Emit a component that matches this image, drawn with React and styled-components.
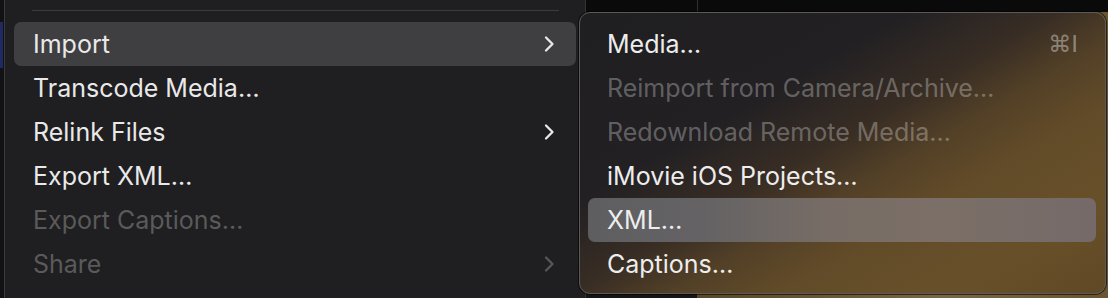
import React from "react";
import styled, { createGlobalStyle } from "styled-components";

const GlobalStyle = createGlobalStyle`
  html, body {
    margin: 0;
    padding: 0;
    background: #0b0b0b;
    overflow: hidden;
  }
  body {
    font-family: Inter, "Open Sans", "Liberation Sans", sans-serif;
    -webkit-font-smoothing: antialiased;
  }
`;

const mainItems = [
    { label: "Import", sub: true, active: true },
    { label: "Transcode Media…" },
    { label: "Relink Files", sub: true },
    { label: "Export XML…" },
    { label: "Export Captions…", disabled: true },
    { label: "Share", sub: true, disabled: true },
];

const subItems = [
    { label: "Media…", shortcut: "⌘I" },
    { label: "Reimport from Camera/Archive…", disabled: true },
    { label: "Redownload Remote Media…", disabled: true },
    { label: "iMovie iOS Projects…" },
    { label: "XML…", active: true },
    { label: "Captions…" },
];

const Chevron = ({ dim }) => (
    <svg width="12" height="18" viewBox="0 0 12 18" fill="none">
        <path
            d="M3 2.5 L9.5 9 L3 15.5"
            stroke={dim ? "#575757" : "#e8e8e8"}
            strokeWidth="2.3"
            strokeLinecap="round"
            strokeLinejoin="round"
        />
    </svg>
);

const App = () => {
    return (
        <Page>
            <GlobalStyle />
            <Edge>
                <BlueTab />
            </Edge>
            <MainMenu>
                <Separator />
                {mainItems.map((item) => (
                    <Row key={item.label} $active={item.active}>
                        <Label $disabled={item.disabled}>{item.label}</Label>
                        {item.sub && <Chevron dim={item.disabled} />}
                    </Row>
                ))}
            </MainMenu>
            <Backdrop>
                <TopBar>
                    <TopCell />
                    <TopCell $line />
                </TopBar>
                <Lower>
                    <DarkCell />
                    <VideoCell />
                </Lower>
            </Backdrop>
            <SubMenu>
                {subItems.map((item) => (
                    <SubRow key={item.label} $active={item.active}>
                        <SubLabel $disabled={item.disabled}>{item.label}</SubLabel>
                        {item.shortcut && <Shortcut>{item.shortcut}</Shortcut>}
                    </SubRow>
                ))}
            </SubMenu>
        </Page>
    );
};

const Page = styled.div`
    position: relative;
    display: flex;
    width: 1108px;
    height: 298px;
    overflow: hidden;
`;

const Edge = styled.div`
    width: 4px;
    background: #121214;
    padding-top: 22px;
`;

const BlueTab = styled.div`
    width: 3px;
    height: 46px;
    background: #1f2a63;
`;

const MainMenu = styled.div`
    width: 582px;
    height: 298px;
    box-sizing: border-box;
    padding: 0 9px;
    background: #1f1e20;
    border-left: 1px solid #3a3a3a;
    border-right: 1px solid #343434;
`;

const Separator = styled.div`
    height: 1px;
    margin: 10px 17px 11px 18px;
    background: #3b3a3d;
`;

const Row = styled.div`
    display: flex;
    align-items: center;
    justify-content: space-between;
    height: 44px;
    padding: 0 21px 0 19px;
    border-radius: 7px;
    background: ${(p) => (p.$active ? "#3f3e40" : "transparent")};
`;

const Label = styled.span`
    font-size: 25px;
    color: ${(p) => (p.$disabled ? "#5a5a5a" : "#e9e9e9")};
`;

const Backdrop = styled.div`
    flex: 1;
    display: flex;
    flex-direction: column;
`;

const TopBar = styled.div`
    height: 12px;
    display: flex;
    background: #0a0a0a;
`;

const TopCell = styled.div`
    width: ${(p) => (p.$line ? "auto" : "110px")};
    flex: ${(p) => (p.$line ? 1 : "none")};
    border-left: 1px solid ${(p) => (p.$line ? "#2f2f2f" : "transparent")};
`;

const Lower = styled.div`
    flex: 1;
    display: flex;
`;

const DarkCell = styled.div`
    width: 111px;
    background: #151516;
`;

const VideoCell = styled.div`
    flex: 1;
    background: linear-gradient(90deg, #5a4729, #7a6544 60%, #6b5432);
`;

const SubMenu = styled.div`
    position: absolute;
    left: 579px;
    top: 12px;
    width: 527px;
    height: 282px;
    box-sizing: border-box;
    padding: 9px 9px 0 8px;
    border-radius: 11px;
    border: 1px solid #5b5a58;
    box-shadow: 0 0 0 1px rgba(0, 0, 0, 0.6);
    background: linear-gradient(
        150deg,
        #1f1e21 0%,
        #222023 32%,
        #382d24 47%,
        #524027 57%,
        #624b28 68%,
        #675029 84%,
        #614826 100%
    );
`;

const SubRow = styled.div`
    display: flex;
    align-items: center;
    justify-content: space-between;
    height: 44px;
    padding: 0 18px 0 19px;
    border-radius: 7px;
    background: ${(p) =>
        p.$active
            ? "linear-gradient(90deg, #5e5e61 0%, #646264 22%, #786d66 48%, #7b6f67 70%, #756a69 100%)"
            : "transparent"};
`;

const SubLabel = styled.span`
    font-size: 25px;
    color: ${(p) => (p.$disabled ? "rgba(255, 255, 255, 0.3)" : "#ededed")};
`;

const Shortcut = styled.span`
    font-family: "DejaVu Sans", sans-serif;
    font-size: 23px;
    color: rgba(255, 255, 255, 0.38);
`;

export default App;
